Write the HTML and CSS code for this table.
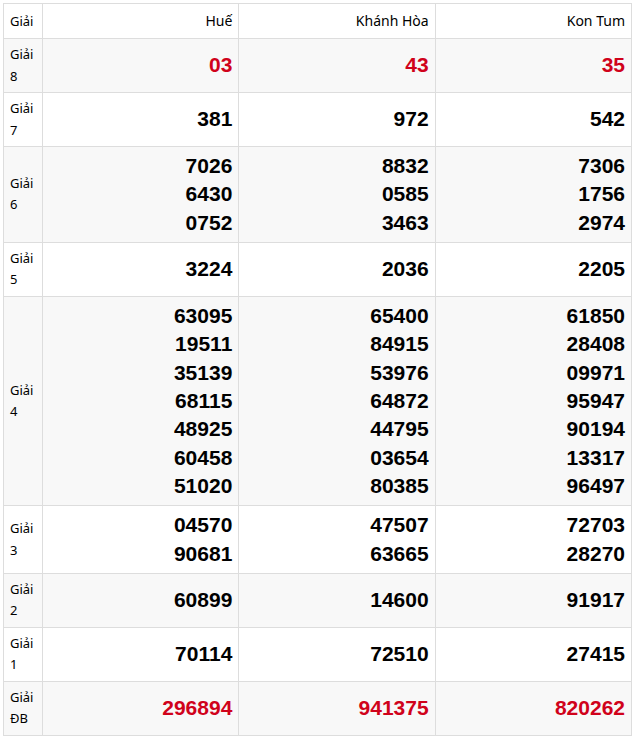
FILE: index.html
```html
<!DOCTYPE html>
<html lang="vi">
<head>
<meta charset="utf-8">
<link rel="stylesheet" href="styles.css">
</head>
<body>
<table class="kq">
  <colgroup><col class="c-label"><col class="c-prov"><col class="c-prov"><col class="c-prov"></colgroup>
  <thead>
    <tr><th class="lbl">Giải</th><th>Huế</th><th>Khánh Hòa</th><th>Kon Tum</th></tr>
  </thead>
  <tbody>
    <tr class="alt"><td class="lbl">Giải 8</td><td class="num red">03</td><td class="num red">43</td><td class="num red">35</td></tr>
    <tr><td class="lbl">Giải 7</td><td class="num">381</td><td class="num">972</td><td class="num">542</td></tr>
    <tr class="alt"><td class="lbl">Giải 6</td><td class="num">7026<br>6430<br>0752</td><td class="num">8832<br>0585<br>3463</td><td class="num">7306<br>1756<br>2974</td></tr>
    <tr><td class="lbl">Giải 5</td><td class="num">3224</td><td class="num">2036</td><td class="num">2205</td></tr>
    <tr class="alt"><td class="lbl">Giải 4</td><td class="num">63095<br>19511<br>35139<br>68115<br>48925<br>60458<br>51020</td><td class="num">65400<br>84915<br>53976<br>64872<br>44795<br>03654<br>80385</td><td class="num">61850<br>28408<br>09971<br>95947<br>90194<br>13317<br>96497</td></tr>
    <tr><td class="lbl">Giải 3</td><td class="num">04570<br>90681</td><td class="num">47507<br>63665</td><td class="num">72703<br>28270</td></tr>
    <tr class="alt"><td class="lbl">Giải 2</td><td class="num">60899</td><td class="num">14600</td><td class="num">91917</td></tr>
    <tr><td class="lbl">Giải 1</td><td class="num">70114</td><td class="num">72510</td><td class="num">27415</td></tr>
    <tr class="alt"><td class="lbl">Giải ĐB</td><td class="num red">296894</td><td class="num red">941375</td><td class="num red">820262</td></tr>
  </tbody>
</table>
</body>
</html>
```
FILE: styles.css
```css
html, body { margin: 0; padding: 0; background: #fff; }
body { padding: 3px; }
.kq {
  border-collapse: collapse;
  width: 629px;
  table-layout: fixed;
  font-family: "Noto Sans", "Open Sans", sans-serif;
  color: #000;
}
.c-label { width: 39px; }
.kq th, .kq td {
  border: 1px solid #ddd;
  padding: 5px 6px;
  vertical-align: middle;
}
.kq th {
  font-weight: normal;
  font-size: 14px;
  line-height: 24px;
  text-align: right;
}
.kq th.lbl { text-align: left; font-size: 13px; }
.kq td.lbl {
  font-size: 13px;
  line-height: 21.5px;
  text-align: left;
  word-spacing: 20px;
}
.num {
  font-family: "Liberation Sans", Arial, sans-serif;
  font-weight: bold;
  font-size: 21px;
  line-height: 28.33px;
  text-align: right;
}
.red { color: #d0021b; }
.alt td { background: #f8f8f8; }
```
